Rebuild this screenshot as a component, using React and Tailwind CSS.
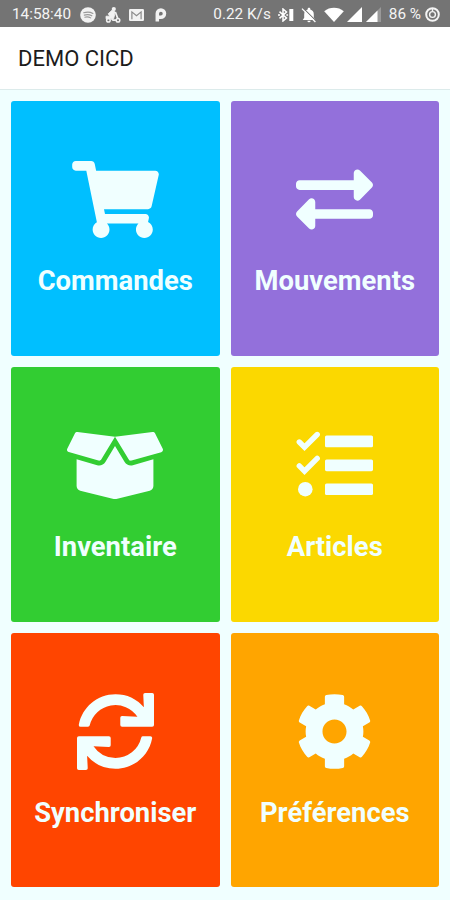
import React from "react";
import {
  FaBoxOpen,
  FaCog,
  FaExchangeAlt,
  FaShoppingCart,
  FaSync,
} from "react-icons/fa";

// Checklist with two ticked rows and heavy bars
function ChecklistIcon({ className }) {
  return (
    <svg className={className} viewBox="0 0 77 77" fill="currentColor">
      <rect x="29" y="8.5" width="48" height="11.8" rx="1.6" />
      <rect x="29" y="32.4" width="48" height="11.8" rx="1.6" />
      <rect x="29" y="56.4" width="48" height="11.6" rx="1.6" />
      <path
        d="m3.3 15 5.2 5.2L21.2 7.5M3.3 38.9l5.2 5.2 12.7-12.7"
        fill="none"
        stroke="currentColor"
        strokeWidth="5.4"
        strokeLinecap="round"
      />
      <circle cx="9.3" cy="62.2" r="7.3" />
    </svg>
  );
}

const tiles = [
  { label: "Commandes", icon: FaShoppingCart, size: "w-[87px]", color: "bg-[#00bfff]" },
  { label: "Mouvements", icon: FaExchangeAlt, size: "w-[77px]", color: "bg-[#9370db]" },
  { label: "Inventaire", icon: FaBoxOpen, size: "w-24", color: "bg-[#32cd32]" },
  { label: "Articles", icon: ChecklistIcon, size: "w-[77px]", color: "bg-[#fbd800]" },
  { label: "Synchroniser", icon: FaSync, size: "w-[77px]", color: "bg-[#ff4500]" },
  { label: "Préférences", icon: FaCog, size: "w-[77px]", color: "bg-[#ffa500]" },
];

function NotificationIcons() {
  return (
    <div className="flex items-center text-[#f2f2f2]">
      {/* Music */}
      <svg className="w-4 h-4" viewBox="0 0 16 16" fill="none">
        <circle cx="8" cy="8" r="7.8" fill="currentColor" />
        <path
          d="M3.7 5.8C6.8 4.8 10.4 5 12.9 6.5M4.3 8.1c2.5-.7 5.4-.5 7.5.7M4.8 10.2c2-.5 4.2-.3 5.9.7"
          stroke="#999"
          strokeWidth="1.1"
          strokeLinecap="round"
        />
      </svg>
      {/* Scooter */}
      <svg className="w-4 h-4 ml-[9px]" viewBox="0 0 16 16" fill="none" stroke="currentColor">
        <circle cx="8.8" cy="2.1" r="2.1" fill="currentColor" stroke="none" />
        <path
          d="M7 3.2 3.2 6.8l1.6 2.4H1v2.6h7.6l1.2-4.4-1.2-3Z"
          fill="currentColor"
          strokeWidth=".8"
          strokeLinejoin="round"
        />
        <path d="m8.2 4.2 3 2.2M10.4 5l2.4 6.6M6.6 11.6l1.4 1.6h3" strokeWidth="1.7" />
        <circle cx="3.4" cy="13.3" r="1.8" strokeWidth="1.5" />
        <circle cx="13" cy="13.3" r="1.8" strokeWidth="1.5" />
      </svg>
      {/* Mail */}
      <svg className="w-[15px] h-3 ml-2" viewBox="0 0 15 12" fill="none">
        <rect width="15" height="12" rx="1.2" fill="currentColor" />
        <path d="M2.9 10.2V2.9l4.6 3.8 4.6-3.8v7.3" stroke="#8a8a8a" strokeWidth="1.2" />
      </svg>
      {/* Letter P badge */}
      <svg className="w-3 h-[14px] ml-[11px]" viewBox="0 0 12 14" fill="none">
        <path
          d="M2.3 13.4V5.6a3.6 3.6 0 1 1 3.6 3.6H4"
          stroke="currentColor"
          strokeWidth="3.5"
        />
      </svg>
    </div>
  );
}

function SystemIcons() {
  return (
    <div className="flex items-center text-white">
      {/* Bluetooth with battery level */}
      <svg className="w-4 h-[14px]" viewBox="0 0 16 14" fill="none">
        <path
          d="m1.5 3.6 7 6.4L5 13V1l3.5 3-7 6.4"
          stroke="currentColor"
          strokeWidth="1.5"
        />
        <path d="M0 7h2M8.3 7h1.8" stroke="currentColor" strokeWidth="1.5" />
        <rect x="11.3" y="1" width="4" height="12" fill="currentColor" />
      </svg>
      {/* Muted bell */}
      <svg className="w-4 h-4 ml-[7px]" viewBox="0 0 16 16">
        <path
          d="M8 .8c.8 0 1.3.5 1.3 1.3v.5c2.3.6 3.5 2.4 3.5 4.8v3.4L14.3 13H1.7l1.5-2.2V7.4C3.2 5 4.4 3.2 6.7 2.6v-.5C6.7 1.3 7.2.8 8 .8ZM6.4 13.7h3.2a1.6 1.6 0 0 1-3.2 0Z"
          fill="currentColor"
        />
        <path d="m2.4 1.4 12.8 12.8" stroke="#747474" strokeWidth="1.1" />
        <path d="m1 1.6 13.4 13.4" stroke="currentColor" strokeWidth="1.3" />
      </svg>
      {/* Wifi */}
      <svg className="w-5 h-[15px] ml-[7px]" viewBox="0 0 20 15">
        <path d="M.2 4.2C5.8-.3 14.2-.3 19.8 4.2L10 14.9Z" fill="currentColor" />
      </svg>
      {/* Mobile signal */}
      <svg className="w-[15px] h-[15px] ml-[3px]" viewBox="0 0 15 15">
        <path d="M15 0v15H0Z" fill="currentColor" />
      </svg>
      <svg className="w-[15px] h-[15px] ml-1" viewBox="0 0 15 15">
        <path d="M15 0v15H0Z" fill="#999" />
        <path d="M11.5 3.5V15H0Z" fill="currentColor" />
      </svg>
    </div>
  );
}

function StatusBar() {
  return (
    <div className="flex items-center h-[27px] pt-[2px] pl-3 pr-[10px] bg-[#747474] text-[#f4f4f4] text-[15.3px] leading-none whitespace-nowrap">
      <span className="w-[68px]">14:58:40</span>
      <NotificationIcons />
      <span className="ml-auto mr-[7px]">0.22 K/s</span>
      <SystemIcons />
      <span className="ml-[8px] mr-1">86 %</span>
      {/* Battery ring */}
      <svg className="w-[15px] h-[15px]" viewBox="0 0 15 15" fill="none" stroke="currentColor">
        <circle cx="7.5" cy="7.5" r="6.3" strokeWidth="2" />
        <circle cx="7.5" cy="7.5" r="2.9" strokeWidth="1.4" />
        <path d="M7.5 1v3" strokeWidth="1.4" />
      </svg>
    </div>
  );
}

function Tile({ label, icon: Icon, size, color }) {
  return (
    <button
      className={`flex flex-col items-center rounded-[3px] pt-[60px] text-[#f0ffff] ${color}`}
    >
      <Icon className={`h-[77px] ${size}`} />
      <span className="mt-[27px] text-[27.4px] leading-8 font-bold">{label}</span>
    </button>
  );
}

function App() {
  return (
    <div className="flex flex-col w-[450px] h-[900px] overflow-hidden bg-[#f0ffff] font-['Roboto',sans-serif]">
      <StatusBar />

      <header className="flex items-center h-[63px] pt-px px-[18px] bg-white border-b border-[#dcebeb] text-[22px] text-[#1c1c1c]">
        <h1>DEMO CICD</h1>
      </header>

      <main className="grid grid-cols-2 grid-rows-3 gap-[11px] flex-1 pt-[11px] px-[11px] pb-[12.7px]">
        {tiles.map((tile) => (
          <Tile key={tile.label} {...tile} />
        ))}
      </main>
    </div>
  );
}

export default App;
